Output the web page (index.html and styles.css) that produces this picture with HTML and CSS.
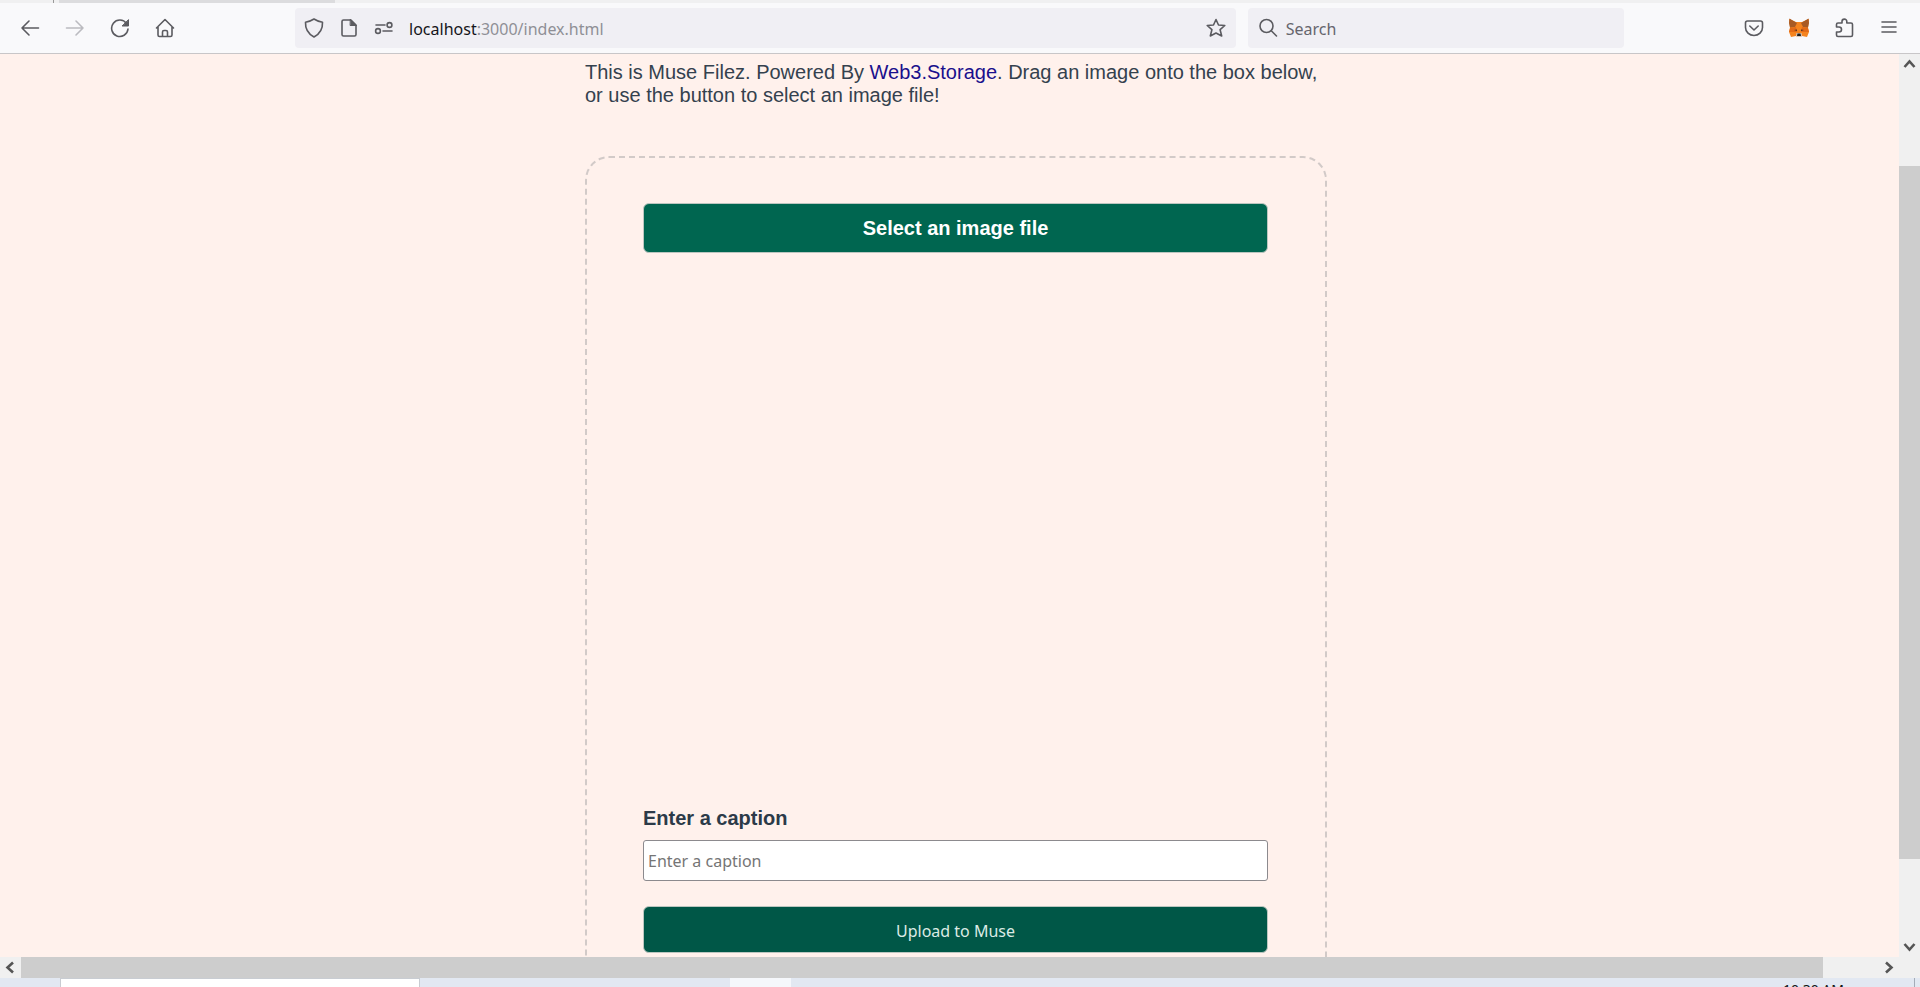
FILE: index.html
```html
<!DOCTYPE html>
<html lang="en">
<head>
<meta charset="utf-8">
<title>Muse Filez</title>
<link rel="stylesheet" href="styles.css">
</head>
<body>
<div class="tabstrip"><span class="tab-pinned"></span><span class="tab-active"></span></div>
<header class="toolbar">
  <nav class="tools" aria-label="Navigation">
    <button class="tool" aria-label="Back"><svg class="icon" viewBox="0 0 20 20"><path d="M18.500 10H2M9 3L2 10l7 7"/></svg></button>
    <button class="tool" aria-label="Forward" disabled><svg class="icon" viewBox="0 0 20 20"><path d="M1.500 10H18M11 3l7 7-7 7"/></svg></button>
    <button class="tool" aria-label="Reload"><svg class="icon" viewBox="0 0 20 20"><path d="M16.500 5.500A8.200 8.200 0 1 0 18 11"/><path class="solid" d="M18.500 2v6h-6z"/></svg></button>
    <button class="tool" aria-label="Home"><svg class="icon" viewBox="0 0 20 20"><path d="M1.500 10L10 1.500l8.500 8.500M3 8.500V17q0 1.500 1.500 1.500h11q1.500 0 1.500-1.500V8.500M7.500 18.500V14q0-1.500 1.500-1.500h2q1.500 0 1.500 1.500v4.500"/></svg></button>
  </nav>
  <span class="spring"></span>
  <div class="field address">
    <svg class="icon" viewBox="0 0 20 20"><path d="M10 1Q14 3.600 18.500 4.200Q19 14 10 19Q1 14 1.500 4.200Q6 3.600 10 1z"/></svg>
    <svg class="icon" viewBox="0 0 20 20"><path d="M12 2H4.500Q3 2 3 3.500v13Q3 18 4.500 18h11q1.500 0 1.500-1.500V7z"/><path class="solid" d="M11.500 1.500l6 6h-6z"/></svg>
    <svg class="icon" viewBox="0 0 20 20"><path d="M2 7h9M9 13h9"/><circle cx="15.500" cy="7" r="2.400"/><circle cx="4" cy="13" r="2.400"/></svg>
    <span class="url" role="textbox" aria-label="Address" contenteditable="true" spellcheck="false"><span class="host">localhost</span>:3000/index.html</span>
    <button class="star" aria-label="Bookmark this page"><svg class="icon" viewBox="0 0 20 20"><path d="M10 1.500l2.500 5.500 6.300.5-4.700 4.200 1.600 6.300L10 15l-5.700 3 1.600-6.300L1.200 7.500 7.500 7z"/></svg></button>
  </div>
  <label class="field search">
    <svg class="icon" viewBox="0 0 20 20"><circle cx="8.500" cy="8" r="6.500"/><path d="M13.300 12.800L18.500 18"/></svg>
    <input class="search-input" type="text" placeholder="Search" aria-label="Search">
  </label>
  <span class="spring"></span>
  <div class="tools">
    <button class="tool" aria-label="Save to Pocket"><svg class="icon" viewBox="0 0 20 20"><path d="M3.500 3h13q2 0 2 2v4.500a8.500 8 0 0 1-17 0V5q0-2 2-2zM5.800 8L10 12l4.200-4"/></svg></button>
    <button class="tool" aria-label="MetaMask"><svg class="icon fox" viewBox="0 0 20 20"><path fill="#f5841f" d="M0 1l7 3h6l7-3-1 9 1 4-2 5-5-1-1.500 1h-3L7 18l-5 1-2-5 1-4z"/><path fill="#a85a24" d="M.5.500L8 5 6 9 1 9.500 0 5zM19.500.500L12 5l2 4 5 .5L20 5z"/><path fill="#e36a17" d="M1 10l6-1 1 5-8 0zM19 10l-6-1-1 5 8 0z"/><path fill="#4a2b20" d="M5 12l3-.5v1.500zM15 12l-3-.5v1.500z"/><path fill="#d8c9bd" d="M7.500 15h5l.5 3-1.500 1h-3L7 18z"/><path fill="#222" d="M8.500 15.500h3l.5 2.500H8z"/></svg></button>
    <button class="tool" aria-label="Extensions"><svg class="icon" viewBox="0 0 20 20"><path d="M2.500 9V6.500Q2.500 5 4 5h4V3.500a2.400 2.400 0 0 1 4.800 0V5H17q1.500 0 1.500 1.500V17q0 1.500-1.500 1.500H4q-1.500 0-1.500-1.500v-3H5a2.500 2.500 0 0 0 0-5z"/></svg></button>
    <button class="tool" aria-label="Menu"><svg class="icon" viewBox="0 0 20 20"><path d="M3 4h14M3 9h14M3 14h14"/></svg></button>
  </div>
</header>
<div class="viewport">
  <div class="page">
    <main class="content">
      <p class="intro">This is Muse Filez. Powered By <a class="link" href="#storage">Web3.Storage</a>. Drag an image onto the box below, or use the button to select an image file!</p>
      <form class="drop-area">
        <button class="button select-button" type="button">Select an image file</button>
        <div class="preview"></div>
        <label class="caption-label" for="caption">Enter a caption</label>
        <input class="caption-input" id="caption" type="text" placeholder="Enter a caption">
        <button class="button upload-button" type="button">Upload to Muse</button>
      </form>
    </main>
  </div>
  <div class="scrollbar vertical">
    <svg class="arrow" viewBox="0 0 21 21"><path d="M5.500 13l5-5.500 5 5.500"/></svg>
    <div class="track"><div class="thumb"></div></div>
    <svg class="arrow" viewBox="0 0 21 21"><path d="M5.500 8l5 5.500 5-5.500"/></svg>
  </div>
  <div class="scrollbar horizontal">
    <svg class="arrow" viewBox="0 0 21 21"><path d="M13 5.500L7.500 10.500l5.500 5"/></svg>
    <div class="track"><div class="thumb"></div></div>
    <svg class="arrow" viewBox="0 0 21 21"><path d="M8 5.500l5.500 5-5.500 5"/></svg>
  </div>
  <div class="corner"></div>
</div>
<footer class="taskbar">
  <div class="task-search"></div>
  <div class="task-app"></div>
  <time class="clock">10:30 AM</time>
  <div class="show-desktop"></div>
</footer>
</body>
</html>
```
FILE: styles.css
```css
* { box-sizing: border-box; }
body {
  margin: 0;
  height: 100vh;
  display: flex;
  flex-direction: column;
  overflow: hidden;
  font-family: "Liberation Sans", Arial, sans-serif;
}
button { border: 0; padding: 0; background: none; font: inherit; cursor: pointer; }

.tabstrip { flex: none; display: flex; height: 3px; background: #f0f0f1; }
.tab-pinned { width: 54px; border-right: 1px solid #999; }
.tab-active { width: 276px; margin-left: 5px; background: #dcdcde; }

.toolbar {
  flex: none;
  display: flex;
  align-items: center;
  height: 51px;
  padding: 0 8px 0 7px;
  background: #f9f9fb;
  border-bottom: 1px solid #c8c6c8;
  font-family: "Noto Sans", sans-serif;
  font-size: 16px;
  color: #5b5b66;
}
.tools { flex: none; display: flex; }
.tool { display: flex; align-items: center; justify-content: center; width: 45px; height: 40px; color: #5b5b60; }
.tool:disabled { color: #bbbbc0; }
.icon { flex: none; width: 20px; height: 20px; fill: none; stroke: currentColor; stroke-width: 1.6; stroke-linecap: round; stroke-linejoin: round; }
.solid { fill: currentColor; stroke-width: 1; }
.fox { stroke: none; }
.spring { flex: 1 1 108px; }
.field { display: flex; align-items: center; height: 40px; border-radius: 4px; background: #f0eff4; color: #5b5b60; }
.address { flex: 9 9 940px; gap: 15px; padding: 0 10px 0 9px; }
.search { flex: 4 4 376px; gap: 8px; margin-left: 12px; padding: 0 10px; }
.url { flex: 1; padding-top: 2px; outline: 0; color: #8f8f96; line-height: 22px; white-space: nowrap; }
.host { color: #15141a; }
.star { display: flex; color: inherit; }
.search-input { flex: 1; min-width: 0; border: 0; outline: 0; padding: 2px 0 0; background: none; font: inherit; }
.search-input::placeholder { color: #66656d; opacity: 1; }

.viewport {
  flex: 1;
  min-height: 0;
  display: grid;
  grid-template: minmax(0, 1fr) 21px / minmax(0, 1fr) 21px;
}
.page { overflow: hidden; padding-left: 13px; background: #fff1ec; color: #34414e; }
.content { max-width: 742px; margin: 0 auto; padding-top: 7px; }
.intro { margin: 0 0 49px; font-size: 20px; line-height: 23px; }
.link { color: #1a0f8c; text-decoration: none; }
.drop-area {
  display: flex;
  flex-direction: column;
  padding: 45px 57px 45px 56px;
  border: 2px dashed #d2cac8;
  border-radius: 24px;
}
.button { border: 1px solid #bcc6c0; border-radius: 6px; }
.select-button { padding: 12px; background: #006650; color: #fff; font-size: 20px; font-weight: 700; line-height: 24px; }
.preview { min-height: 554px; }
.caption-label { margin-bottom: 10px; font-size: 20px; font-weight: 700; line-height: 23px; color: #2c3a48; }
.caption-input {
  height: 41px;
  padding: 0 4px;
  border: 1px solid #8c8a8e;
  border-radius: 3px;
  background: #fff;
  font-family: "Noto Sans", sans-serif;
  font-size: 16px;
}
.caption-input::placeholder { color: #757575; opacity: 1; }
.upload-button {
  height: 47px;
  margin-top: 25px;
  padding-top: 2px;
  background: #005747;
  color: #dcebe5;
  font-family: "Noto Sans", sans-serif;
  font-size: 16px;
}

.scrollbar { display: flex; background: #f0f0f0; }
.vertical { flex-direction: column; }
.arrow { flex: none; width: 21px; height: 21px; fill: none; stroke: #555; stroke-width: 2.6; }
.track { flex: 1; display: flex; }
.vertical .track { flex-direction: column; padding: 91px 0 77px; }
.horizontal .track { padding-right: 55px; }
.thumb { flex: 1; background: #cdcdcd; }
.corner { background: #f0f0f0; }

.taskbar {
  flex: none;
  display: flex;
  align-items: flex-start;
  height: 9px;
  overflow: hidden;
  padding-left: 60px;
  background: #e2e8f2;
}
.task-search { width: 360px; height: 40px; border: 1px solid #c8ccd2; background: #fff; }
.task-app { width: 61px; height: 40px; margin-left: 310px; background: #f5f7fb; }
.clock { margin: 3px 70px 0 auto; font-family: "Noto Sans", sans-serif; font-size: 14px; line-height: 18px; color: #111; }
.show-desktop { width: 6px; height: 40px; border-left: 1px solid #a4acb8; }
```
